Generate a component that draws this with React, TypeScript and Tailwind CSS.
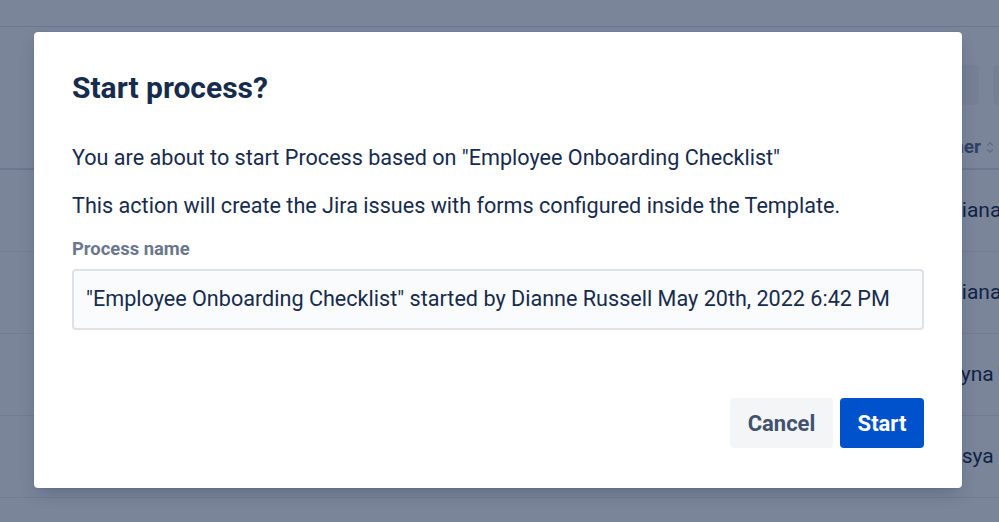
import { ChevronUp, ChevronDown } from "lucide-react";

const rows = ["Diana Rose", "Diana Rose", "Kyna Taylor", "Asya Kim"];

function Background() {
  return (
    <div className="h-[522px] w-[999px] overflow-hidden bg-white text-[#172b4d]">
      <div className="h-[27px] border-b border-[#dfe1e6]" />
      <div className="flex h-[76px] justify-end gap-[14px] pt-[38px]">
        <div className="h-[40px] w-[38px] rounded-[4px] bg-[#f4f5f7]" />
        <div className="h-[40px] w-[6px] rounded-l-[4px] bg-[#f4f5f7]" />
      </div>
      <div className="flex h-[67px] items-center border-b-2 border-[#dfe1e6] pl-[926px] pt-[24px] text-[19px] font-bold text-[#5e6c84]">
        <span>Owner</span>
        <span className="ml-[4px] flex flex-col text-[#c1c7d0]">
          <ChevronUp size={10} strokeWidth={3} className="-mb-[3px]" />
          <ChevronDown size={10} strokeWidth={3} />
        </span>
      </div>
      {rows.map((r, i) => (
        <div key={i} className="flex h-[82px] items-center whitespace-nowrap border-b border-[#ebecf0] pl-[948px] text-[21px]">
          {r}
        </div>
      ))}
    </div>
  );
}

export default function App() {
  return (
    <div className="relative h-[522px] w-[999px] overflow-hidden font-['Roboto',sans-serif]">
      <Background />
      <div className="absolute inset-0 bg-[rgba(9,30,66,0.54)]" />
      <div className="absolute left-[34px] top-[32px] w-[928px] rounded-[4px] bg-white px-[38px] pb-[40px] pt-[36px] shadow-[0_0_1px_rgba(9,30,66,0.31),0_8px_16px_-4px_rgba(9,30,66,0.25)]">
        <h2 className="text-[30px] font-bold leading-[40px] text-[#172b4d]">Start process?</h2>
        <div className="mt-[36px] text-[21.6px] leading-[28px] text-[#172b4d]">
          <p>You are about to start Process based on "Employee Onboarding Checklist"</p>
          <p className="mt-[20px]">This action will create the Jira issues with forms configured inside the Template.</p>
        </div>
        <label className="mt-[19px] block text-[18.4px] font-bold leading-[20px] text-[#6b778c]">Process name</label>
        <div className="mt-[10px] flex h-[61px] items-center whitespace-nowrap rounded-[4px] border-2 border-[#dfe1e6] bg-[#fafbfc] px-[12px] text-[21.6px] text-[#172b4d]">
          "Employee Onboarding Checklist" started by Dianne Russell May 20th, 2022 6:42 PM
        </div>
        <div className="mt-[68px] flex justify-end gap-[7px]">
          <button className="h-[50px] w-[103px] rounded-[4px] bg-[#f4f5f7] text-[22px] font-bold text-[#42526e]">Cancel</button>
          <button className="h-[50px] w-[84px] rounded-[4px] bg-[#0052cc] text-[22px] font-bold text-white">Start</button>
        </div>
      </div>
    </div>
  );
}
